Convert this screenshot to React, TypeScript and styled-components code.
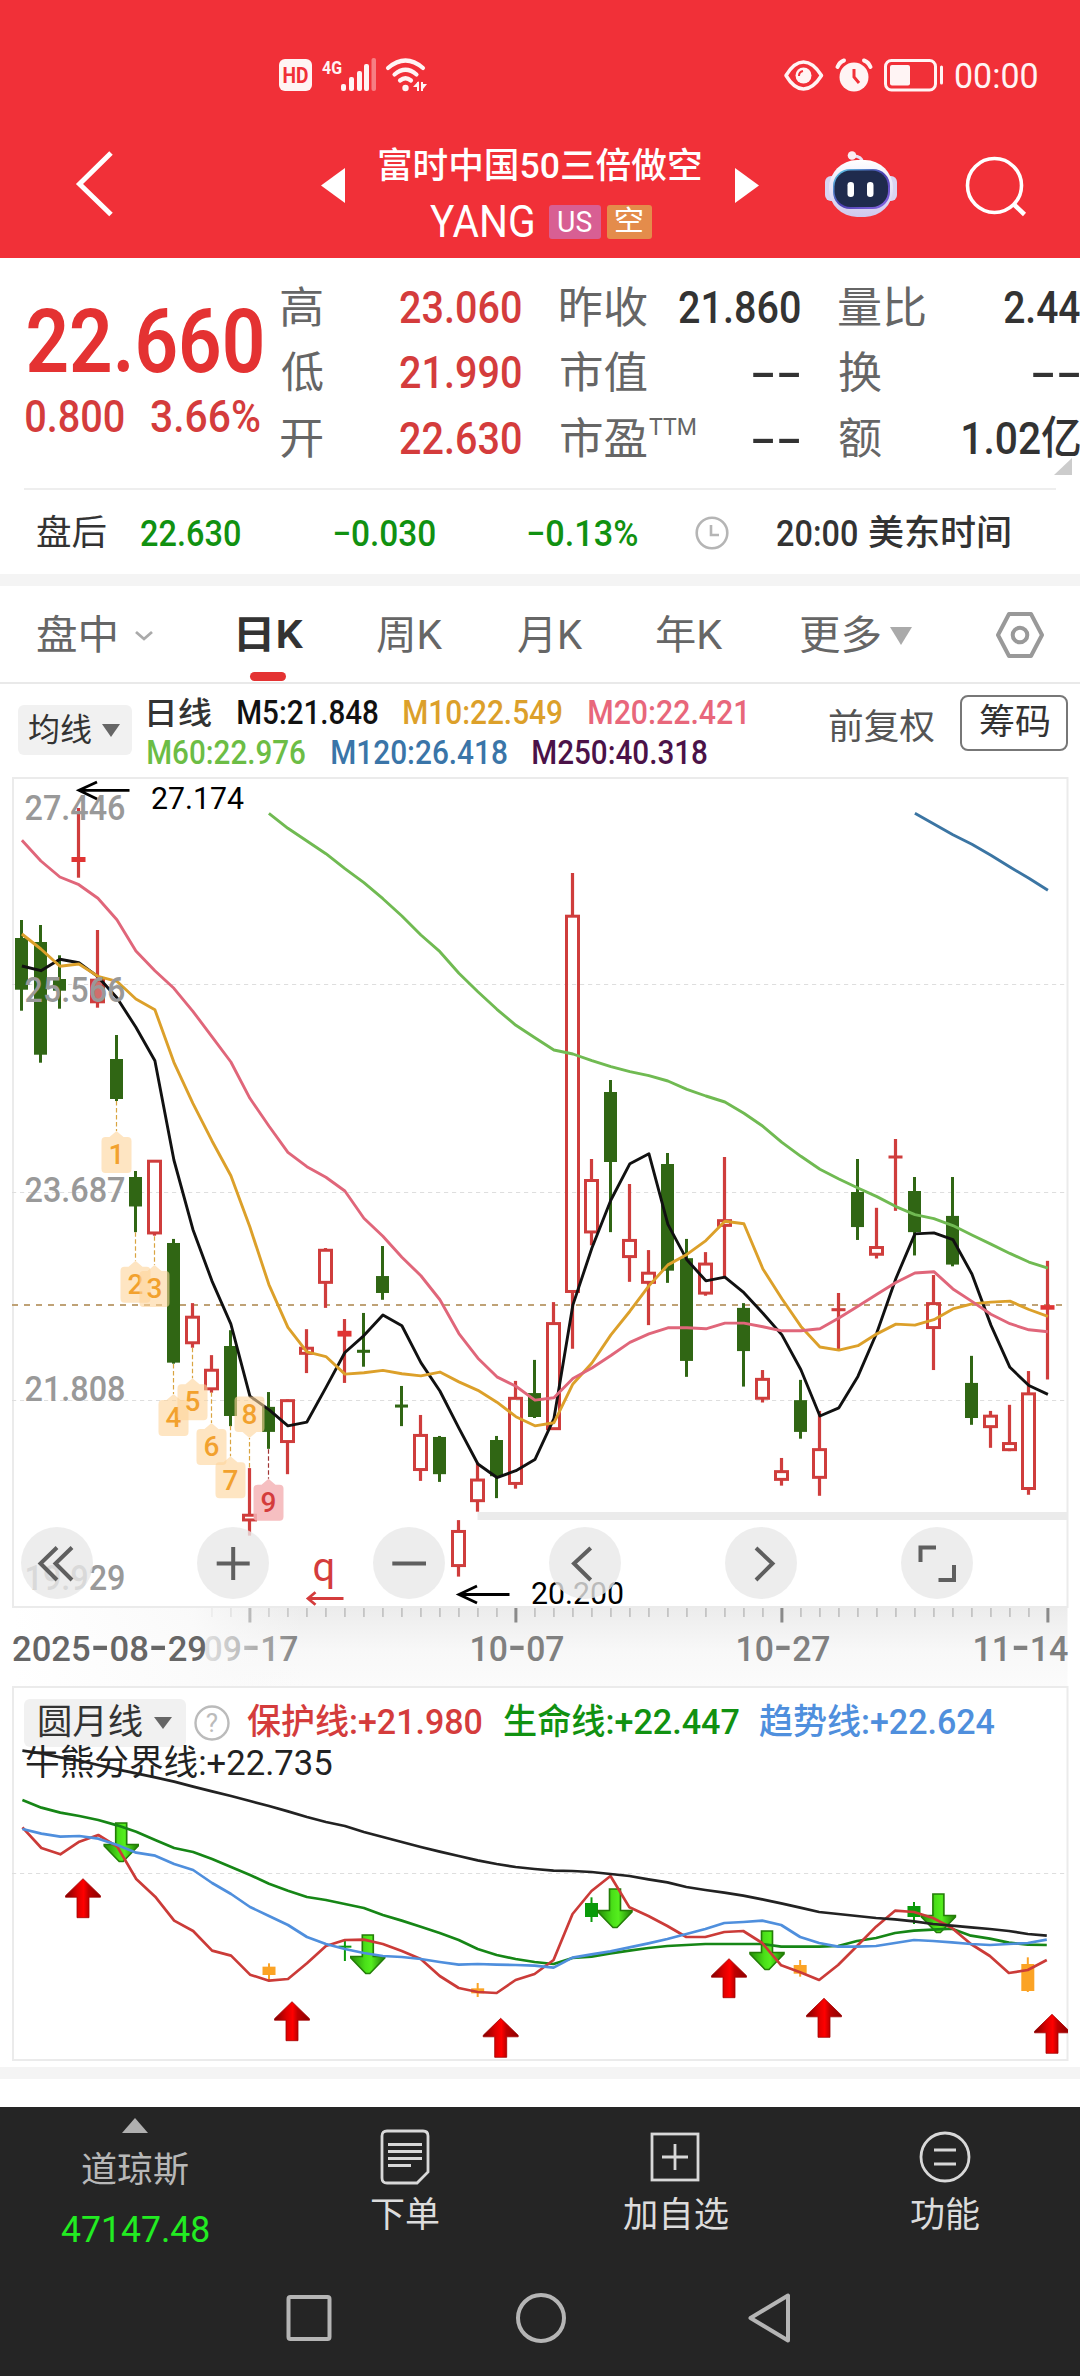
import React, { useLayoutEffect, useRef, useState } from "react";
import styled, { createGlobalStyle } from "styled-components";

const FONT = 'Roboto, "Noto Sans CJK SC", sans-serif';
const RED = "#d43c3c";
const GREEN = "#119111";
const BLUE = "#4f8fdd";
const UP = "#cf3d3c";
const DOWN = "#306614";

const Global = createGlobalStyle`
  body { margin: 0; background: #fff; font-family: ${FONT}; }
  * { box-sizing: border-box; }
  svg { display: block; flex: none; overflow: visible; }
`;

/* ---------- condensed text: squeezes its glyphs into a given ink width ---------- */

const FitBox = styled.span<{ $w: number; $size: number; $weight: number; $color: string; $ml: number }>`
  display: block;
  flex: none;
  width: ${(p) => p.$w}px;
  height: ${(p) => Math.round(p.$size * 1.2)}px;
  line-height: ${(p) => Math.round(p.$size * 1.2)}px;
  margin-left: ${(p) => p.$ml}px;
  font-size: ${(p) => p.$size}px;
  font-weight: ${(p) => p.$weight};
  color: ${(p) => p.$color};
  white-space: nowrap;
`;
const FitText = styled.span`
  display: inline-block;
  transform-origin: 0 50%;
`;

interface FitProps {
  children: string;
  w: number;
  size: number;
  weight?: number;
  color?: string;
  ml?: number;
}

function Fit({ children, w, size, weight = 400, color = "#333", ml = 0 }: FitProps) {
  const ref = useRef<HTMLSpanElement>(null);
  const [transform, setTransform] = useState("none");
  useLayoutEffect(() => {
    const ctx = document.createElement("canvas").getContext("2d");
    if (!ctx || !ref.current) return;
    ctx.font = `${weight} ${size}px ${FONT}`;
    const m = ctx.measureText(children);
    const s = w / (m.actualBoundingBoxLeft + m.actualBoundingBoxRight);
    setTransform(`translateX(${m.actualBoundingBoxLeft * s}px) scaleX(${s})`);
  }, [children, w, size, weight]);
  return (
    <FitBox $w={w} $size={size} $weight={weight} $color={color} $ml={ml}>
      <FitText ref={ref} style={{ transform }}>{children}</FitText>
    </FitBox>
  );
}

/* ---------- page parts ---------- */

const Page = styled.main`
  width: 1080px;
  height: 2376px;
  overflow: hidden;
  background: #fff;
`;
const Header = styled.header`
  height: 258px;
  background: #f13038;
`;
const StatusBar = styled.div`
  display: flex;
  align-items: center;
  justify-content: space-between;
  height: 108px;
  padding: 42px 43px 0 279px;
`;
const StatusGroup = styled.div`
  display: flex;
  align-items: center;
`;
const ClockSlot = styled.div`
  padding-top: 3px;
`;
const TitleBar = styled.div`
  display: flex;
  height: 150px;
  padding-top: 42px;
`;
const TitleStack = styled.div`
  display: flex;
  flex-direction: column;
  align-items: center;
  width: 390px;
  margin-top: -5px;
`;
const SymbolRow = styled.div`
  display: flex;
  align-items: center;
  height: 52px;
  margin-top: 8px;
  padding-left: 1px;
`;
const Tag = styled.span<{ $bg: string; $w: number; $ml: number }>`
  display: flex;
  align-items: center;
  justify-content: center;
  width: ${(p) => p.$w}px;
  height: 34px;
  margin-left: ${(p) => p.$ml}px;
  border-radius: 3px;
  background: ${(p) => p.$bg};
`;
const IconSlot = styled.div<{ $ml: number }>`
  margin-left: ${(p) => p.$ml}px;
`;

const Quote = styled.section`
  display: grid;
  grid-template-columns: 213.5px 240px 239px 241px;
  column-gap: 39.5px;
  width: 1080px;
  height: 230px;
  padding: 17px 0 0 28px;
`;
const PriceCol = styled.div`
  padding-top: 13px;
`;
const ChangeRow = styled.div`
  display: flex;
  margin: -5px 0 0 -2px;
`;
const StatRow = styled.div`
  display: flex;
  align-items: center;
  justify-content: space-between;
  height: 65.5px;
`;
const LabelGroup = styled.div`
  display: flex;
  align-items: flex-start;
`;
const Corner = styled.div`
  width: 0;
  height: 0;
  margin: -30px 0 0 1054px;
  border-left: 18px solid transparent;
  border-bottom: 17px solid #ccc;
`;
const QuoteRule = styled.div`
  height: 2px;
  margin: 13px 24px 0;
  background: #eee;
`;
const AfterHours = styled.section`
  display: flex;
  align-items: center;
  height: 84px;
  padding: 4px 0 0 37px;
`;
const Band = styled.div`
  height: 12px;
  background: #f4f4f4;
`;
const Tabs = styled.nav`
  display: flex;
  height: 98px;
  padding-left: 37px;
  border-bottom: 2px solid #e9e9e9;
`;
const Tab = styled.div<{ $ml?: number }>`
  display: flex;
  flex-direction: column;
  align-items: center;
  margin-left: ${(p) => p.$ml ?? 0}px;
  padding-top: 26px;
`;
const TabRow = styled.div`
  display: flex;
  align-items: center;
`;
const TabMark = styled.div`
  width: 36px;
  height: 9px;
  margin: 13px 6px 0 0;
  border-radius: 5px;
  background: #e43232;
`;
const Toolbar = styled.div`
  display: flex;
  height: 88px;
  padding-left: 18px;
`;
const Pill = styled.div<{ $w: number; $h: number }>`
  display: flex;
  align-items: center;
  flex: none;
  width: ${(p) => p.$w}px;
  height: ${(p) => p.$h}px;
  border-radius: 6px;
  background: #f1f1f1;
`;
const Legend = styled.div`
  width: 680px;
  margin-left: 16px;
  padding-top: 9px;
`;
const LegendRow = styled.div`
  display: flex;
  align-items: center;
  height: 40px;
`;
const Adjust = styled.div`
  width: 132px;
  padding: 23px 0 0 1px;
`;
const Outlined = styled.div`
  display: flex;
  align-items: center;
  justify-content: center;
  width: 108px;
  height: 56px;
  margin-top: 11px;
  border: 2px solid #777;
  border-radius: 8px;
`;
const ToolPillSlot = styled.div`
  padding-top: 21px;
`;
const ChartArea = styled.section`
  position: relative;
`;
const Controls = styled.div`
  position: absolute;
  top: 754.5px;
  left: 21px;
  display: flex;
  gap: 104px;
`;
const RoundButton = styled.button`
  width: 72px;
  height: 72px;
  padding: 0;
  border: 0;
  border-radius: 50%;
  background: rgba(232, 232, 232, 0.8);
`;
const SubLabels = styled.div`
  position: absolute;
  top: 12px;
  left: 24px;
`;
const SubRow = styled.div`
  display: flex;
  align-items: center;
  height: 50px;
`;
const SubRowTight = styled.div`
  display: flex;
  margin: -5px 0 0 2px;
`;
const Spacer = styled.div`
  height: 28px;
`;
const Bottom = styled.footer`
  height: 269px;
  background: #252525;
`;
const Actions = styled.div`
  display: grid;
  grid-template-columns: repeat(4, 270px);
  height: 160px;
`;
const Action = styled.div<{ $pt: number }>`
  display: flex;
  flex-direction: column;
  align-items: center;
  padding-top: ${(p) => p.$pt}px;
`;
const ActionIcon = styled.div<{ $gap?: number }>`
  display: flex;
  align-items: center;
  height: 60px;
  margin-bottom: ${(p) => p.$gap ?? 8}px;
`;
const IndexName = styled.div`
  display: flex;
  align-items: center;
  height: 76px;
`;
const SysNav = styled.div`
  display: flex;
  align-items: center;
  justify-content: space-between;
  height: 102px;
  padding: 0 288px 0 285px;
`;

/* ---------- icons ---------- */

const Caret = ({ w, h, color, up }: { w: number; h: number; color: string; up?: boolean }) => (
  <svg width={w} height={h}>
    <path d={up ? `M0 ${h}L${w / 2} 0L${w} ${h}Z` : `M0 0H${w}L${w / 2} ${h}Z`} fill={color} />
  </svg>
);

const StatusLeft = () => (
  <StatusGroup>
    <svg width="150" height="34" viewBox="279 58 150 34" fill="#fff4f4">
      <rect x="279" y="59" width="33" height="32" rx="6" />
      <text x="282.5" y="83" fontSize="22" fontWeight="700" fill="#f13038" textLength="26" lengthAdjust="spacingAndGlyphs">HD</text>
      <text x="322" y="73.5" fontSize="19" fontWeight="700" textLength="20" lengthAdjust="spacingAndGlyphs">4G</text>
      <rect x="341" y="84" width="5" height="7" rx="2" />
      <rect x="349" y="77" width="5" height="14" rx="2" />
      <rect x="357" y="71" width="5" height="20" rx="2" />
      <rect x="364" y="64" width="5" height="27" rx="2" />
      <rect x="371.500" y="58" width="4.500" height="33" rx="2" opacity="0.4" />
      <g fill="none" stroke="#fff4f4" strokeWidth="4.200" strokeLinecap="round">
        <path d="M388 68Q405.500 53 423 68" />
        <path d="M394.500 74.500Q405.500 65 416.500 74.500" />
        <path d="M400 80.500Q405.500 76 411 80.500" />
      </g>
      <circle cx="405.500" cy="88" r="3.200" />
      <path d="M413 87h5.500v-6zM421.500 84h5.500l-5.500 7z" />
      <path d="M417 82h2v9h-2zM421 82h2v9h-2z" />
    </svg>
  </StatusGroup>
);

const StatusRight = () => (
  <StatusGroup>
    <svg width="171" height="34" viewBox="783 58 171 34" fill="none" stroke="#fff4f4">
      <path d="M785 75.500Q793 62 802.500 62T820.500 75.500Q812 89 802.500 89T785 75.500Z" strokeWidth="3.500" strokeLinejoin="round" />
      <circle cx="802.500" cy="75.500" r="8" fill="#fff4f4" stroke="none" />
      <path d="M802 71a5 5 0 0 0-4 5" stroke="#f13038" strokeWidth="2" />
      <circle cx="853" cy="77" r="14.500" fill="#fff4f4" stroke="none" />
      <path d="M853 69v8l5 6" stroke="#f13038" strokeWidth="3" />
      <path d="M836.500 67q2-5 6.500-6.500M869.500 67q-2-5-6.500-6.500" strokeWidth="4" strokeLinecap="round" />
      <rect x="884.500" y="60.500" width="50" height="29.500" rx="6" strokeWidth="3" />
      <rect x="889" y="65" width="20" height="20.500" rx="2" fill="#fff4f4" stroke="none" />
      <path d="M940.500 67v16" strokeWidth="3" strokeLinecap="round" />
    </svg>
    <ClockSlot><Fit w={82} size={35} color="#fff4f4">00:00</Fit></ClockSlot>
  </StatusGroup>
);

const Robot = () => (
  <svg width="74" height="68" viewBox="824 149 74 68">
    <defs>
      <linearGradient id="shell" x1="0" y1="0" x2="0" y2="1">
        <stop offset="0" stopColor="#fff" />
        <stop offset="1" stopColor="#cfc8ee" />
      </linearGradient>
      <linearGradient id="visor" x1="0" y1="0" x2="1" y2="1">
        <stop offset="0" stopColor="#62d8ee" />
        <stop offset="0.500" stopColor="#4a3fae" />
        <stop offset="1" stopColor="#8d6be8" />
      </linearGradient>
    </defs>
    <path d="M862 161q0-6-9-6" fill="none" stroke="#e9e2f6" strokeWidth="3" />
    <circle cx="852" cy="154.500" r="4.300" fill="#fbeef4" />
    <rect x="825" y="175" width="13" height="25" rx="6" fill="#d9d4f2" />
    <rect x="884" y="175" width="13" height="25" rx="6" fill="#d9d4f2" />
    <rect x="829" y="159" width="64" height="57" rx="28" fill="url(#shell)" />
    <rect x="833" y="168" width="57" height="40" rx="17" fill="url(#visor)" />
    <rect x="834.500" y="169.500" width="53.500" height="36.500" rx="16" fill="#1f2b4d" />
    <rect x="847.500" y="181" width="6.500" height="15" rx="3.200" fill="#fff" />
    <rect x="867" y="181" width="6.500" height="15" rx="3.200" fill="#fff" />
  </svg>
);

/* ---------- main chart data: [kind, high, bodyTop, bodyBottom, low] ---------- */

type Candle = [number, number, number, number, number];
const CANDLES: Candle[] = [
  [0, 920, 938, 989.7, 1010.7], [0, 925, 942, 1054.7, 1062.7], [0, 955.3, 979, 990.7, 1008.7],
  [2, 808, 857, 862, 877.7], [1, 930, 979, 1003, 1007.7], [0, 1035, 1059, 1099, 1101],
  [0, 1171, 1177, 1205.7, 1231], [1, 1160, 1160, 1233, 1234.5], [0, 1237.7, 1241.7, 1359.7, 1360.7],
  [1, 1301, 1313.7, 1341.3, 1345], [1, 1352.3, 1366, 1386.7, 1389.3], [0, 1327.7, 1343.3, 1412.3, 1422.3],
  [1, 1463.7, 1509, 1516, 1530.3], [0, 1388.7, 1403.3, 1428, 1444.7], [1, 1396, 1396, 1438.7, 1469.7],
  [1, 1326.7, 1344.3, 1351.7, 1370], [1, 1246.7, 1247.7, 1281.7, 1305.7], [2, 1316.7, 1328.3, 1334, 1379.7],
  [0, 1310.7, 1347, 1350, 1363.7], [0, 1244.7, 1274.3, 1291, 1297.7], [0, 1382.7, 1401, 1404, 1422.3],
  [1, 1411.3, 1430.3, 1466.3, 1476.3], [0, 1432, 1433, 1469.7, 1477.3], [1, 1515, 1525, 1561, 1570.7],
  [1, 1458.3, 1474.3, 1497, 1506.7], [0, 1432, 1436, 1471.7, 1493.3], [1, 1377.7, 1393.7, 1480, 1484],
  [0, 1357, 1389.7, 1413.3, 1414.3], [1, 1300, 1320, 1426, 1426], [1, 873, 915, 1290.7, 1346],
  [1, 1159, 1179.3, 1232, 1244], [0, 1080, 1092, 1162, 1231], [1, 1184, 1238, 1256.3, 1280],
  [1, 1248.7, 1270.3, 1281.7, 1322.7], [0, 1153, 1164, 1269, 1281], [0, 1237.7, 1256.7, 1358, 1373.7],
  [1, 1250.7, 1261.3, 1292.3, 1293.7], [1, 1157, 1218.5, 1225.5, 1276.7], [0, 1301, 1305.7, 1348.3, 1383.3],
  [1, 1367, 1375, 1396, 1399], [1, 1453.7, 1466, 1476, 1481], [0, 1376.7, 1396.7, 1428, 1434.7],
  [1, 1407.3, 1444.3, 1474, 1491], [2, 1291, 1306, 1309, 1346.7], [0, 1159, 1192, 1226, 1238.7],
  [1, 1207, 1245, 1254, 1257], [2, 1139, 1155.5, 1158.5, 1210], [0, 1177, 1191, 1231, 1254],
  [1, 1273.3, 1300.3, 1326.3, 1367], [0, 1177, 1215, 1263, 1264.7], [0, 1353, 1379.7, 1414.3, 1421],
  [1, 1407.3, 1411.3, 1424, 1443.7], [1, 1401.3, 1438.3, 1446.7, 1447], [1, 1368, 1389.3, 1485, 1490],
  [2, 1259.3, 1303, 1307.5, 1376.3],
];

const M5 = [966, 970.7, 959.3, 962.7, 976.7, 997.7, 1027.3, 1060.7, 1160, 1228.3, 1279, 1321.7, 1392.7, 1406, 1422, 1418.3, 1384.3, 1349.7, 1333, 1312.7, 1323.3, 1359.7, 1387.7, 1424.3, 1459.7, 1473, 1466.3, 1455.3, 1415, 1302.7, 1246.7, 1199.3, 1163.7, 1153.7, 1223.3, 1258.3, 1279, 1275.3, 1290.7, 1311, 1332.3, 1366.7, 1412.3, 1404.3, 1373.3, 1330, 1276.7, 1232.7, 1231.7, 1238.3, 1272.3, 1322.7, 1364.3, 1382.3, 1391];
const M10 = [934, 949, 966.3, 964, 976.3, 981.3, 999, 1009.7, 1062.3, 1103.3, 1140.7, 1175.7, 1226, 1282.7, 1325, 1349, 1353.7, 1371, 1369.7, 1367.3, 1370.7, 1372.7, 1369, 1378.7, 1387, 1398.7, 1413, 1422, 1419, 1380.7, 1360, 1332.3, 1309, 1284, 1263.3, 1253, 1239.3, 1220.3, 1222.7, 1267.3, 1296.7, 1324, 1344.3, 1347.3, 1343, 1331.3, 1321.7, 1322.7, 1317.3, 1306.7, 1301.7, 1300, 1299, 1307.3, 1314];
const M20 = [840.3, 861, 877, 884.7, 898.3, 919.7, 951, 970.7, 988.3, 1011.3, 1036.7, 1062, 1098.3, 1126, 1152.3, 1166.7, 1177.3, 1191, 1217.3, 1235, 1255.7, 1274, 1297.7, 1331, 1355.3, 1373.7, 1383, 1396.7, 1394.3, 1375.3, 1365, 1352.7, 1339.7, 1331.3, 1325.3, 1325.3, 1326.3, 1320.7, 1320.7, 1324.3, 1328.3, 1328.3, 1326.3, 1315.7, 1304, 1292.3, 1280.7, 1271.3, 1270, 1287, 1299.3, 1312, 1321.3, 1327.3, 1329.3];
const M60 = [813.3, 828.3, 841, 853.7, 868.7, 882.7, 898.7, 916, 935, 951.7, 973.3, 991.7, 1009.3, 1025.3, 1037.7, 1050, 1054, 1060.7, 1066.7, 1071.7, 1075.7, 1081, 1089.3, 1096, 1102, 1113.3, 1126.3, 1142.3, 1156.3, 1169.3, 1179, 1188, 1196, 1205.8, 1213.7, 1217.6, 1224.5, 1233.9, 1242.8, 1252, 1260.5, 1266.5];
const M120 = [813.3, 824, 834.7, 844.3, 855.3, 867, 878.3, 890.3];

const X0 = 21.9;
const STEP = 19;
const cx = (i: number) => X0 + STEP * i;
/* the lower half of the series is recorded on a slightly denser scale */
const py = (y: number) => (y > 1192 ? 1150 + (y - 1150) * 1.01403 : y);
const line = (ys: number[], start = 0) => ys.map((y, i) => `${cx(i + start)},${py(y)}`).join(" ");

interface CountMark { n: number; i: number; tip: number; from: number; hot?: boolean; above?: boolean }
const COUNTS: CountMark[] = [
  { n: 1, i: 5, tip: 1131, from: 1101 },
  { n: 2, i: 6, tip: 1259.3, from: 1231 },
  { n: 3, i: 7, tip: 1263.3, from: 1235 },
  { n: 4, i: 8, tip: 1390.7, from: 1361 },
  { n: 5, i: 9, tip: 1375, from: 1345 },
  { n: 6, i: 10, tip: 1419.3, from: 1389 },
  { n: 7, i: 11, tip: 1452, from: 1422 },
  { n: 8, i: 12, tip: 1434, from: 1463, above: true },
  { n: 9, i: 13, tip: 1474.3, from: 1445, hot: true },
];

const CountFlag = ({ n, i, tip: rawTip, from, hot, above }: CountMark) => {
  const x = cx(i) - 0.4;
  const tip = py(rawTip);
  const d = above ? -1 : 1;
  const boxTop = above ? tip - 41.5 : tip + 6;
  return (
    <g>
      <path d={`M${x} ${py(from)}V${tip}`} stroke={hot ? "#a03434" : "#d9a441"} strokeWidth="1.200" strokeDasharray="4.500 2.500" />
      <path
        d={above
          ? `M${x - 11} ${boxTop}h22q4 0 4 4v27.500q0 4-4 4h-4l-7 6l-7-6h-4q-4 0-4-4v-27.500q0-4 4-4z`
          : `M${x - 11} ${boxTop}h4l7-6l7 6h4q4 0 4 4v28q0 4-4 4h-22q-4 0-4-4v-28q0-4 4-4z`}
        fill={hot ? "#f5b4b6" : "#fdd39a"}
        opacity={hot ? 0.85 : 0.6}
      />
      <text x={x} y={tip + (d > 0 ? 33.3 : -13.5)} textAnchor="middle" fontSize="28" fontWeight="500" fill={hot ? RED : "#f2a12e"}>{n}</text>
    </g>
  );
};

const DateText = ({ x, w, parts, fill }: { x: number; w: number; parts: string[]; fill: string }) => (
  <text x={x - 1.5} y="1661" fontSize="35" fontWeight="500" fill={fill} textLength={w + 3} lengthAdjust="spacingAndGlyphs">
    {parts.map((p, i) => (
      <React.Fragment key={i}>
        {i > 0 && <tspan fontSize="58" fontWeight="400" dx="1.500" dy="4">-</tspan>}
        <tspan dx={i > 0 ? 1.5 : 0} dy={i > 0 ? -4 : 0}>{p}</tspan>
      </React.Fragment>
    ))}
  </text>
);

const PRICE_LABELS: [string, number][] = [
  ["27.446", 820.3], ["25.566", 1002.3], ["23.687", 1201.5], ["21.808", 1400.5], ["19.929", 1590.4],
];

const MainChart = () => (
  <svg width="1080" height="914" viewBox="0 772 1080 914" fontFamily={FONT}>
    <defs>
      <linearGradient id="axisFill" x1="0" y1="0" x2="0" y2="1">
        <stop offset="0" stopColor="#ececec" />
        <stop offset="0.550" stopColor="#f8f8f8" />
        <stop offset="1" stopColor="#fbfbfb" />
      </linearGradient>
      <linearGradient id="axisFade" x1="0" y1="0" x2="1" y2="0">
        <stop offset="0" stopColor="#fff" stopOpacity="1" />
        <stop offset="0.620" stopColor="#fbfbfb" stopOpacity="0.900" />
        <stop offset="1" stopColor="#f8f8f8" stopOpacity="0" />
      </linearGradient>
    </defs>

    <rect x="13" y="1608" width="1054.500" height="78" fill="url(#axisFill)" />
    {Array.from({ length: 45 }, (_, k) => k + 10).map((i) => {
      const major = (i - 12) % 14 === 0;
      return (
        <rect key={i} x={cx(i) - (major ? 1.5 : 0.9)} y="1608" width={major ? 3 : 1.8}
          height={major ? 14.5 : 9} fill={major ? "#8a8a8a" : "#c4c4c4"} />
      );
    })}
    <DateText x={205} w={92} parts={["09", "17"]} fill="#808080" />
    <rect x="13" y="1608" width="290" height="78" fill="url(#axisFade)" />
    <DateText x={13.5} w={192} parts={["2025", "08", "29"]} fill="#666" />
    <DateText x={471} w={92} parts={["10", "07"]} fill="#808080" />
    <DateText x={737} w={92} parts={["10", "27"]} fill="#808080" />
    <DateText x={974} w={93} parts={["11", "14"]} fill="#808080" />

    <rect x="13" y="778" width="1054.500" height="829" fill="none" stroke="#ebebeb" strokeWidth="2" />
    {[984.5, 1192.5, 1400.5].map((y) => (
      <path key={y} d={`M12 ${y}H1067`} stroke="#dedede" strokeWidth="1.200" strokeDasharray="4.200 3.800" />
    ))}
    <rect x="477.500" y="1512" width="590.500" height="8" fill="#ebebeb" />
    <path d="M12 1305H1067" stroke="#bfa276" strokeWidth="1.800" strokeDasharray="6 6" />

    {CANDLES.map(([kind, ...prices], i) => {
      const [hi, top, bot, lo] = prices.map(py);
      const x = cx(i) - 0.4;
      if (kind === 0) {
        return (
          <g key={i} fill={DOWN}>
            <rect x={x - 1.5} y={hi} width="3" height={lo - hi} />
            <rect x={x - 6.5} y={top} width="13" height={bot - top} />
          </g>
        );
      }
      if (kind === 2) {
        return (
          <g key={i} fill={i === 43 || i === 46 ? UP : "#e03433"}>
            <rect x={x - 1.6} y={hi} width="3.200" height={lo - hi} fill={UP} />
            <rect x={x - 7} y={top} width="14" height={bot - top} />
          </g>
        );
      }
      return (
        <g key={i}>
          <rect x={x - 1.6} y={hi} width="3.200" height={Math.max(0, top - hi + 1)} fill={UP} />
          <rect x={x - 1.6} y={bot - 1} width="3.200" height={Math.max(0, lo - bot + 1)} fill={UP} />
          {i === 15 && <rect x={x - 1.6} y={top} width="3.200" height={bot - top} fill={UP} />}
          <rect x={x - 6} y={top + 1.2} width="12" height={bot - top - 2.4} fill={i === 4 ? "#cf6f6d" : "none"} stroke={UP} strokeWidth="3" />
        </g>
      );
    })}

    <g fill="none" strokeWidth="2.900" strokeLinejoin="round">
      <polyline points={line(M5)} stroke="#111" />
      <polyline points={line(M10)} stroke="#dca02a" />
      <polyline points={line(M20)} stroke="#e0667a" />
      <polyline points={line(M60, 13)} stroke="#70ba52" />
      <polyline points={line(M120, 47)} stroke="#3b75a3" />
    </g>

    {COUNTS.map((c) => <CountFlag key={c.n} {...c} />)}

    {PRICE_LABELS.map(([t, y]) => (
      <text key={t} x="24.500" y={y} fontSize="35.500" fontWeight="500" fill="#999" textLength="101" lengthAdjust="spacingAndGlyphs">{t}</text>
    ))}
    <g fontSize="30.500" fill="#000">
      <text x="151" y="808.500" textLength="93" lengthAdjust="spacingAndGlyphs">27.174</text>
      <text x="531" y="1604" textLength="93" lengthAdjust="spacingAndGlyphs">20.200</text>
    </g>
    <g fill="none" stroke="#000" strokeWidth="2.800">
      <path d="M129.500 790.300H79M97 782L79 790.300L97 799" />
      <path d="M509.500 1594.500H459M477 1586L459 1594.500L477 1603" />
    </g>
    <text x="312.500" y="1580.500" fontSize="40" fill={RED}>q</text>
    <path d="M343.500 1598.500H308M315.500 1592.200L308 1598.500L315.500 1604.800" fill="none" stroke={RED} strokeWidth="2.800" />
  </svg>
);

/* ---------- indicator chart: values are thirds of a pixel below the panel origin ---------- */

const BEAR = [242, 250, 262, 272, 285, 298, 310, 322, 335, 350, 364, 378, 393, 408, 424, 441, 456, 468, 486, 501, 516, 531, 545, 558, 571, 582, 591, 597, 602, 603, 606, 612, 618, 628, 637, 651, 660, 668, 677, 688, 700, 713, 726, 732, 738, 744, 748, 754, 762, 767, 772, 777, 783, 792, 797];
const PROTECT = [472, 534, 553, 515, 495, 530, 627, 680, 752, 783, 842, 857, 914, 932, 927, 880, 828, 810, 809, 822, 843, 867, 918, 954, 966, 969, 930, 912, 870, 732, 663, 618, 712, 738, 768, 801, 801, 786, 783, 819, 886, 907, 930, 885, 828, 770, 722, 726, 744, 774, 822, 858, 909, 900, 870];
const LIFE = [390, 413, 428, 438, 450, 466, 485, 510, 534, 546, 567, 591, 615, 641, 662, 681, 690, 702, 714, 735, 752, 770, 789, 810, 837, 855, 867, 876, 882, 864, 860, 850, 842, 834, 828, 825, 822, 822, 822, 822, 830, 830, 830, 828, 813, 804, 789, 782, 779, 776, 797, 806, 818, 824, 825];
const TREND = [477, 491, 500, 498, 506, 525, 548, 557, 582, 600, 639, 672, 711, 738, 765, 801, 822, 837, 849, 858, 861, 867, 876, 884, 882, 884, 885, 887, 893, 863, 853, 844, 832, 820, 807, 792, 777, 759, 756, 752, 765, 801, 819, 830, 830, 828, 819, 810, 813, 817, 822, 825, 822, 819, 809];
const sx = (i: number) => 22.4 + 18.97 * i;
const sy = (v: number) => 1670 + v / 3;
const subLine = (vs: number[]) => vs.map((v, i) => `${sx(i)},${sy(v)}`).join(" ");

const SIGNALS: [number, string, number, number, number, number][] = [
  [13, "#fba325", 880, 890, 915, 930], [17, "#0a9a0a", 813, 827, 833, 873], [24, "#fba325", 939, 955, 970, 981],
  [30, "#0a9a0a", 682, 699, 741, 756], [41, "#fba325", 870, 885, 911, 920],
  [47, "#0a9a0a", 696, 708, 741, 762], [53, "#fba325", 862, 882, 963, 966],
];
const BUYS: [number, number][] = [[83, 1878.7], [292, 2001.7], [500.7, 2018.3], [729, 1958.7], [824, 1998.3], [1052, 2014.3]];
const SELLS: [number, number][] = [[121.2, 1823], [367.8, 1935], [615, 1889], [767, 1931], [938.4, 1894]];

const SubChart = () => (
  <svg width="1080" height="381" viewBox="0 1686 1080 381">
    <defs>
      <linearGradient id="buy" x1="0" y1="0" x2="1" y2="0">
        <stop offset="0" stopColor="#7c0000" />
        <stop offset="0.340" stopColor="#d00" />
        <stop offset="0.520" stopColor="#f00" />
        <stop offset="0.660" stopColor="#c00000" />
        <stop offset="1" stopColor="#8c0000" />
      </linearGradient>
      <linearGradient id="sell" x1="0" y1="0" x2="1" y2="0">
        <stop offset="0" stopColor="#258a08" />
        <stop offset="0.420" stopColor="#4ae018" />
        <stop offset="0.600" stopColor="#55ee1e" />
        <stop offset="1" stopColor="#1f7a06" />
      </linearGradient>
      <clipPath id="panel"><rect x="12" y="1686" width="1056" height="376" /></clipPath>
    </defs>
    <rect x="13" y="1687" width="1054.500" height="373" fill="none" stroke="#ebebeb" strokeWidth="2" />
    <path d="M12 1873.500H1067" stroke="#dedede" strokeWidth="1.200" strokeDasharray="4.200 3.800" />
    {SIGNALS.map(([i, c, hi, t, b, lo]) => (
      <g key={i} fill={c}>
        <rect x={sx(i) - 1} y={sy(hi)} width="2" height={(lo - hi) / 3} />
        <rect x={sx(i) - 6.5} y={sy(t)} width="13" height={(b - t) / 3} />
      </g>
    ))}
    <g clipPath="url(#panel)">
      {BUYS.map(([x, y]) => (
        <path key={x} d={`M${x} ${y}l17.500 17v1.500h-11.500v20.500h-12v-20.500h-11.500v-1.500z`} fill="url(#buy)" stroke="#a30000" strokeWidth="0.800" />
      ))}
      {SELLS.map(([x, y]) => (
        <path key={x} d={`M${x - 5.5} ${y}h11v21.500h11.500v1.500l-15 15.500h-4l-15-15.500v-1.500h11.500z`} fill="url(#sell)" stroke="#237d07" strokeWidth="1.600" />
      ))}
    </g>
    <g fill="none" strokeWidth="2.700" strokeLinejoin="round">
      <polyline points={subLine(LIFE)} stroke="#168616" />
      <polyline points={subLine(PROTECT)} stroke="#cb3b38" />
      <polyline points={subLine(BEAR)} stroke="#222" />
      <polyline points={subLine(TREND)} stroke={BLUE} />
    </g>
  </svg>
);

const BUTTON_ICONS = [
  "M36 20.500L19.500 36.500L36 53M51 20.500L34.500 36.500L51 53",
  "M19.700 36.500H52.700M36.200 20V53",
  "M19.300 36.500H53",
  "M41.700 21L25 36.500L41.700 53",
  "M31 21L47.500 36.500L31 53",
  "M19.500 35V20.500H35M37.500 53H53V38",
];

const STATS: { label: string; lw: number; value: string; vw: number; color: string; ttm?: boolean }[][] = [
  [
    { label: "高", lw: 41, value: "23.060", vw: 121, color: RED },
    { label: "低", lw: 42, value: "21.990", vw: 121, color: RED },
    { label: "开", lw: 41, value: "22.630", vw: 121, color: RED },
  ],
  [
    { label: "昨收", lw: 86, value: "21.860", vw: 121, color: "#333" },
    { label: "市值", lw: 86, value: "--", vw: 48, color: "#333" },
    { label: "市盈", lw: 86, value: "--", vw: 48, color: "#333", ttm: true },
  ],
  [
    { label: "量比", lw: 86, value: "2.44", vw: 76, color: "#333" },
    { label: "换", lw: 42, value: "--", vw: 48, color: "#333" },
    { label: "额", lw: 42, value: "1.02亿", vw: 117, color: "#333" },
  ],
];

export default function App() {
  return (
    <Page>
      <Global />
      <Header>
        <StatusBar>
          <StatusLeft />
          <StatusRight />
        </StatusBar>
        <TitleBar>
          <IconSlot $ml={75}>
            <svg width="40" height="68" viewBox="75 150 40 68">
              <path d="M111 153L79.500 184L111 214.500" fill="none" stroke="#fff" strokeWidth="5" />
            </svg>
          </IconSlot>
          <IconSlot $ml={206}>
            <svg width="24" height="68" viewBox="321 150 24 68"><path d="M321 185.500L345 168V203Z" fill="#fff" /></svg>
          </IconSlot>
          <TitleStack>
            <Fit w={322} size={35.5} weight={500} color="#fff">富时中国50三倍做空</Fit>
            <SymbolRow>
              <Fit w={103} size={44} color="#fff">YANG</Fit>
              <Tag $bg="#d85f93" $w={52} $ml={16}><Fit w={34} size={29} color="#fff">US</Fit></Tag>
              <Tag $bg="#e48c4b" $w={45} $ml={6}><Fit w={26} size={28} color="#fff">空</Fit></Tag>
            </SymbolRow>
          </TitleStack>
          <IconSlot $ml={0}>
            <svg width="24" height="68" viewBox="735 150 24 68"><path d="M759 185.500L735 168V203Z" fill="#fff" /></svg>
          </IconSlot>
          <IconSlot $ml={65}><Robot /></IconSlot>
          <IconSlot $ml={66}>
            <svg width="64" height="68" viewBox="964 149 64 68" fill="none" stroke="#fff" strokeWidth="3.600">
              <circle cx="994.500" cy="184.500" r="27" />
              <path d="M1013.500 203L1024.500 213.500" strokeWidth="4.500" />
            </svg>
          </IconSlot>
        </TitleBar>
      </Header>

      <Quote>
        <PriceCol>
          <Fit w={234} size={89} weight={600} color="#e43232">22.660</Fit>
          <ChangeRow>
            <Fit w={98} size={45} weight={500} color={RED}>0.800</Fit>
            <Fit w={109} size={45} weight={500} color={RED} ml={27}>3.66%</Fit>
          </ChangeRow>
        </PriceCol>
        {STATS.map((col, c) => (
          <div key={c}>
            {col.map((s) => (
              <StatRow key={s.label}>
                <LabelGroup>
                  <Fit w={s.lw} size={43} color="#666">{s.label}</Fit>
                  {s.ttm && <Fit w={46} size={24} color="#666" ml={2}>TTM</Fit>}
                </LabelGroup>
                <Fit w={s.vw} size={45} weight={500} color={s.color}>{s.value}</Fit>
              </StatRow>
            ))}
          </div>
        ))}
      </Quote>
      <Corner />
      <QuoteRule />
      <AfterHours>
        <Fit w={69} size={35}>盘后</Fit>
        <Fit w={99} size={36} weight={500} color={GREEN} ml={35}>22.630</Fit>
        <Fit w={101} size={36} weight={500} color={GREEN} ml={94}>−0.030</Fit>
        <Fit w={109} size={36} weight={500} color={GREEN} ml={93}>−0.13%</Fit>
        <IconSlot $ml={58}>
          <svg width="34" height="34" fill="none" stroke="#b5b5b5" strokeWidth="2.600">
            <circle cx="17" cy="16" r="15.300" />
            <path d="M16 8V18H24" />
          </svg>
        </IconSlot>
        <Fit w={80} size={36} weight={500} ml={48}>20:00</Fit>
        <Fit w={141} size={35} weight={500} ml={12}>美东时间</Fit>
      </AfterHours>
      <Band />

      <Tabs>
        <Tab>
          <TabRow>
            <Fit w={79} size={40} color="#666">盘中</Fit>
            <IconSlot $ml={19}>
              <svg width="18" height="10"><path d="M1 1L9 8L17 1" fill="none" stroke="#aaa" strokeWidth="2.800" /></svg>
            </IconSlot>
          </TabRow>
        </Tab>
        <Tab $ml={86}>
          <Fit w={64} size={39} weight={600}>日K</Fit>
          <TabMark />
        </Tab>
        <Tab $ml={74}><Fit w={66} size={40} color="#666">周K</Fit></Tab>
        <Tab $ml={75}><Fit w={65} size={40} color="#666">月K</Fit></Tab>
        <Tab $ml={73}><Fit w={67} size={40} color="#666">年K</Fit></Tab>
        <Tab $ml={77}>
          <TabRow>
            <Fit w={80} size={40} color="#666">更多</Fit>
            <IconSlot $ml={10}><Caret w={22} h={18} color="#aaa" /></IconSlot>
          </TabRow>
        </Tab>
        <Tab $ml={84}>
          <svg width="48" height="46" fill="none" stroke="#999" strokeWidth="4" strokeLinejoin="round">
            <path d="M13 2H35L46 23L35 44H13L2 23Z" />
            <circle cx="24" cy="23" r="7.300" />
          </svg>
        </Tab>
      </Tabs>

      <Toolbar>
        <ToolPillSlot>
          <Pill $w={114} $h={50}>
            <Fit w={62} size={32} ml={11}>均线</Fit>
            <IconSlot $ml={11}><Caret w={18} h={13} color="#666" /></IconSlot>
          </Pill>
        </ToolPillSlot>
        <Legend>
          <LegendRow>
            <Fit w={62} size={31} weight={500} ml={1}>日线</Fit>
            <Fit w={140} size={33.5} weight={500} color="#111" ml={27}>M5:21.848</Fit>
            <Fit w={158} size={33.5} weight={500} color="#dca02a" ml={26}>M10:22.549</Fit>
            <Fit w={156} size={33.5} weight={500} color="#e8677b" ml={27}>M20:22.421</Fit>
          </LegendRow>
          <LegendRow>
            <Fit w={157} size={33.5} weight={500} color="#6cbd45">M60:22.976</Fit>
            <Fit w={175} size={33.5} weight={500} color="#3a75a8" ml={27}>M120:26.418</Fit>
            <Fit w={174} size={33.5} weight={500} color="#4b1248" ml={26}>M250:40.318</Fit>
          </LegendRow>
        </Legend>
        <Adjust><Fit w={105} size={35} color="#555">前复权</Fit></Adjust>
        <Outlined><Fit w={69} size={35}>筹码</Fit></Outlined>
      </Toolbar>

      <ChartArea>
        <MainChart />
        <Controls>
          {BUTTON_ICONS.map((d) => (
            <RoundButton key={d}>
              <svg width="72" height="72"><path d={d} fill="none" stroke="#5f5f5f" strokeWidth="4" /></svg>
            </RoundButton>
          ))}
        </Controls>
      </ChartArea>

      <ChartArea>
        <SubChart />
        <SubLabels>
          <SubRow>
            <Pill $w={162} $h={48}>
              <Fit w={103} size={35} ml={14.5}>圆月线</Fit>
              <IconSlot $ml={12}><Caret w={18} h={12} color="#666" /></IconSlot>
            </Pill>
            <IconSlot $ml={8}>
              <svg width="36" height="36" fontFamily={FONT}>
                <circle cx="18" cy="18" r="16.500" fill="none" stroke="#bbb" strokeWidth="2.400" />
                <text x="18" y="27" fontSize="26" textAnchor="middle" fill="#bbb">?</text>
              </svg>
            </IconSlot>
            <Fit w={235} size={35} weight={500} color={RED} ml={17}>保护线:+21.980</Fit>
            <Fit w={235} size={35} weight={500} color={GREEN} ml={22}>生命线:+22.447</Fit>
            <Fit w={236} size={35} weight={500} color={BLUE} ml={20}>趋势线:+22.624</Fit>
          </SubRow>
          <SubRowTight><Fit w={306} size={35} weight={400} color="#222">牛熊分界线:+22.735</Fit></SubRowTight>
        </SubLabels>
      </ChartArea>
      <Band />
      <Spacer />

      <Bottom>
        <Actions>
          <Action $pt={11}>
            <Caret w={26} h={15} color="#b0b0b0" up />
            <IndexName><Fit w={106} size={35} color="#b8b8b8">道琼斯</Fit></IndexName>
            <Fit w={148} size={36} color="#22ec22">47147.48</Fit>
          </Action>
          <Action $pt={20}>
            <ActionIcon>
              <svg width="50" height="56" fill="none" stroke="#d8d8d8" strokeWidth="2.800">
                <path d="M7 2H43Q48 2 48 7V43L37 54H7Q2 54 2 49V7Q2 2 7 2Z" />
                <path d="M8 15.500H42M8 22.500H42M8 29.500H42M8 36.500H31" />
              </svg>
            </ActionIcon>
            <Fit w={68} size={35} color="#dcdcdc">下单</Fit>
          </Action>
          <Action $pt={20}>
            <ActionIcon>
              <svg width="50" height="50" fill="none" stroke="#d8d8d8" strokeWidth="2.800">
                <rect x="2" y="2" width="46" height="46" />
                <path d="M12 25H38M25 12V38" />
              </svg>
            </ActionIcon>
            <Fit w={105} size={35} color="#dcdcdc">加自选</Fit>
          </Action>
          <Action $pt={20}>
            <ActionIcon>
              <svg width="52" height="52" fill="none" stroke="#d8d8d8" strokeWidth="2.800">
                <circle cx="26" cy="26" r="24" />
                <path d="M15 19H37M15 33H37" />
              </svg>
            </ActionIcon>
            <Fit w={68} size={35} color="#dcdcdc">功能</Fit>
          </Action>
        </Actions>
        <SysNav>
          <svg width="48" height="50" fill="none" stroke="#b5b5b5" strokeWidth="4">
            <rect x="3.500" y="4" width="41" height="42" rx="2" />
          </svg>
          <svg width="50" height="50" fill="none" stroke="#b5b5b5" strokeWidth="4">
            <circle cx="25" cy="25" r="23" />
          </svg>
          <svg width="44" height="50" fill="none" stroke="#b5b5b5" strokeWidth="4" strokeLinejoin="round">
            <path d="M40 2.500V47.500L2.500 25Z" />
          </svg>
        </SysNav>
      </Bottom>
    </Page>
  );
}
